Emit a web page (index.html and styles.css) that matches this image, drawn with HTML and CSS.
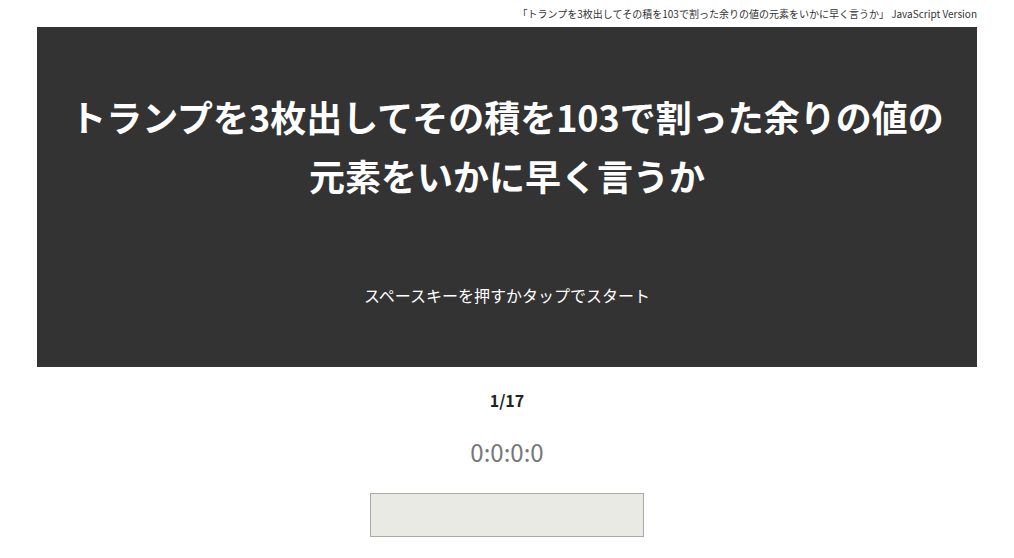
FILE: index.html
```html
<!DOCTYPE html>
<html lang="ja">
<head>
    <meta charset="UTF-8">
    <title>トランプを3枚出してその積を103で割った余りの値の元素をいかに早く言うか</title>
    <link rel="stylesheet" href="styles.css">
</head>
<body>
    <div class="wrap">
        <p class="version">「トランプを3枚出してその積を103で割った余りの値の元素をいかに早く言うか」 JavaScript Version</p>
        <div class="stage">
            <h1 class="title">トランプを3枚出してその積を103で割った余りの値の<br>元素をいかに早く言うか</h1>
            <p class="hint">スペースキーを押すかタップでスタート</p>
        </div>
        <div class="count">1/17</div>
        <div class="time">0:0:0:0</div>
        <div class="answer"></div>
    </div>
</body>
</html>
```

FILE: styles.css
```css
body {
    margin: 0;
    background-color: #fff;
    font-family: "Noto Sans CJK JP", "Noto Sans", sans-serif;
    color: #222;
}
.wrap {
    width: 940px;
    margin: 0 auto;
    display: flex;
    flex-direction: column;
    align-items: center;
}
.version {
    align-self: flex-end;
    margin: 6px 0;
    font-size: 10px;
    line-height: 15px;
    color: #333;
}
.stage {
    width: 100%;
    height: 340px;
    box-sizing: border-box;
    background-color: #333;
    color: #fff;
    text-align: center;
    padding-top: 60px;
}
.title {
    margin: 0;
    font-size: 36px;
    font-weight: bold;
    line-height: 59px;
}
.hint {
    margin: 78px 0 0;
    font-size: 16px;
}
.count {
    margin-top: 22px;
    font-size: 16px;
    line-height: 22px;
    font-weight: bold;
}
.time {
    margin-top: 23px;
    font-size: 24px;
    color: #777;
}
.answer {
    margin-top: 24px;
    width: 272px;
    height: 42px;
    background-color: #eaeae4;
    border: 1px solid #aaa;
}
```
